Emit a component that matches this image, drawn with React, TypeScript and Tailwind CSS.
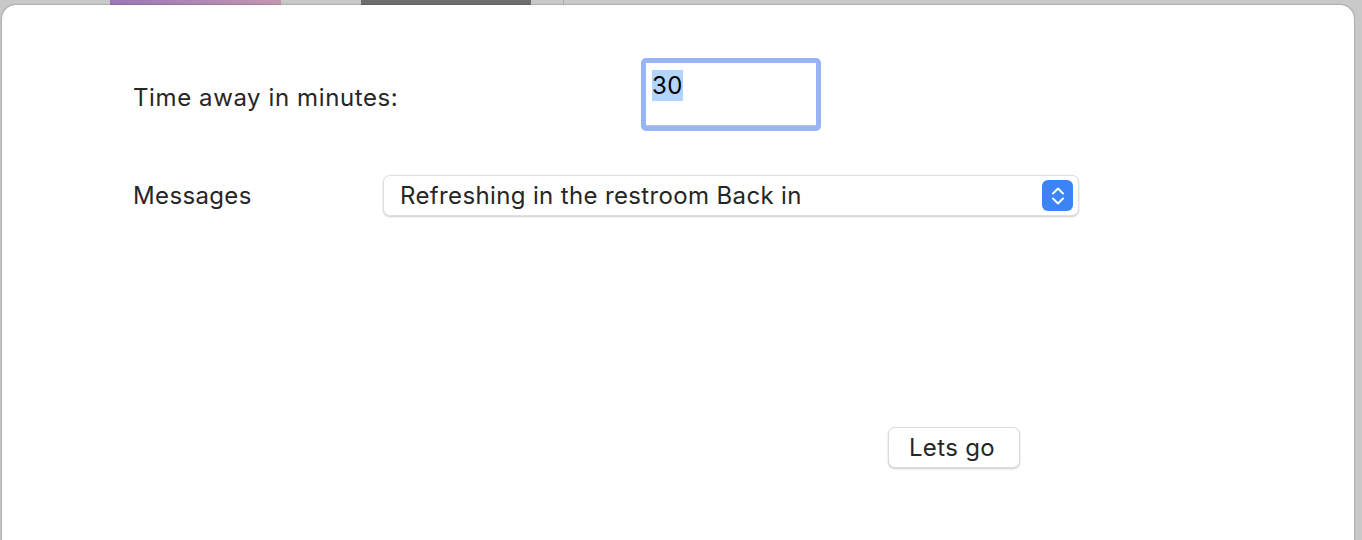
import { ChevronDown, ChevronUp } from 'lucide-react';

const font = { fontFamily: 'Inter, "Noto Sans", sans-serif' };

export default function App() {
  return (
    <div className="relative h-[540px] w-[1362px] overflow-hidden bg-[#c9c9c9]" style={font}>
      {/* backdrop strip behind the sheet */}
      <div className="absolute left-[110px] top-0 h-[6px] w-[171px] bg-gradient-to-r from-[#9a78b8] to-[#c497b0]" />
      <div className="absolute left-[361px] top-0 h-[6px] w-[170px] bg-[#6e6e6e]" />
      <div className="absolute left-[563px] top-0 h-[6px] w-px bg-[#b0b0b0]" />

      {/* sheet */}
      <div className="absolute left-[2px] top-[5px] h-[560px] w-[1352px] rounded-[14px] bg-white shadow-[0_0_2px_rgba(0,0,0,0.45)]">
        <div className="flex flex-col pl-[131px] pt-[53px] text-[24px] leading-[30px] tracking-[0.015em] text-[#262626]">
          <div className="flex items-center">
            <span className="w-[508px] pt-[6px] tracking-[0.025em]">Time away in minutes:</span>
            <div className="h-[73px] w-[180px] rounded-[5px] bg-[#98b4f5] p-[5px]">
              <div className="h-full w-full bg-white pl-[6px] pt-[8px] shadow-[inset_0_-1px_0_rgba(60,90,170,0.35)]">
                <span className="bg-[#b3d4fd] py-[1px] text-black">30</span>
              </div>
            </div>
          </div>

          <div className="mt-[44px] flex items-center">
            <span className="w-[250px]">Messages</span>
            <div className="flex h-[41px] w-[696px] items-center justify-between rounded-[7px] border border-[#e0e0e0] bg-white pl-[16px] pr-[5px] shadow-[0_1px_2px_rgba(0,0,0,0.2)]">
              <span>Refreshing in the restroom Back in</span>
              <div className="flex h-[31px] w-[31px] flex-col items-center justify-center rounded-[6px] bg-[#3a84f6] text-white">
                <ChevronUp size={20} strokeWidth={2.3} className="-mb-[5px]" />
                <ChevronDown size={20} strokeWidth={2.3} className="-mt-[5px]" />
              </div>
            </div>
          </div>

          <div className="mt-[211px] flex pl-[755px]">
            <button className="h-[41px] w-[132px] rounded-[7px] border border-[#dcdcdc] bg-white pr-[4px] text-[#262626] shadow-[0_1px_2px_rgba(0,0,0,0.2)]">
              Lets go
            </button>
          </div>
        </div>
      </div>
    </div>
  );
}
